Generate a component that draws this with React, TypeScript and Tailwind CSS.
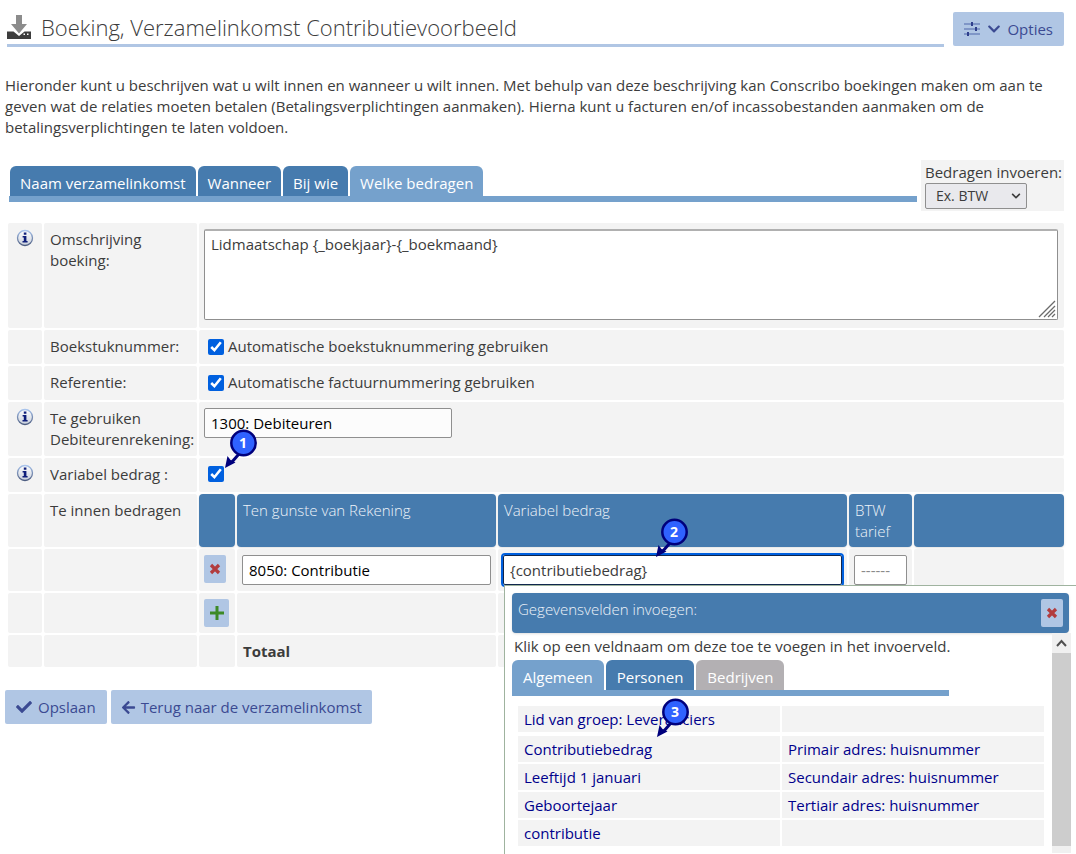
import type { ReactNode } from 'react';
import clsx from 'clsx';
import { FaArrowLeft, FaCheck, FaChevronDown } from 'react-icons/fa';

const CELL = 'bg-[#f3f3f3] rounded-xs align-top p-0';
const HEAD = 'bg-[#467bae] rounded-sm align-top text-left font-light text-[#eef3f9] px-1.5 pt-1.5 pb-1 shadow-sm';
const FIELD = 'h-[30px] border border-[#8f8f8f] rounded-xs px-1.5 text-black';
const SOFT_BUTTON = 'bg-[#b0c6e4] text-[#3b4a92] rounded-xs flex items-center';

const steps = ['Naam verzamelinkomst', 'Wanneer', 'Bij wie', 'Welke bedragen'];

const groupFields = [['Lid van groep: Leveranciers', '']];

const relationFields = [
  ['Contributiebedrag', 'Primair adres: huisnummer'],
  ['Leeftijd 1 januari', 'Secundair adres: huisnummer'],
  ['Geboortejaar', 'Tertiair adres: huisnummer'],
  ['contributie', ''],
];

function DownloadIcon() {
  return (
    <svg width="24" height="26" viewBox="0 0 24 26" aria-hidden="true">
      <path d="M0 17.500h6.500L12 22l5.500-4.500H24V25H0z" fill="#3d3d3d" />
      <path d="M9 1h6v9h5l-8 9.500L4 10h5z" fill="#8c8c8c" />
      <path d="M16.500 19.500H18V21h-1.500zM20 19.500h1.500V21H20z" fill="#fff" />
    </svg>
  );
}

function SlidersIcon() {
  return (
    <svg width="17" height="16" viewBox="0 0 17 16" fill="none" aria-hidden="true">
      <path d="M0 3h16M0 8h16M0 13h16" stroke="#6f86bd" strokeWidth="1.500" />
      <path d="M8 1v4M12 6v4M4 11v4" stroke="#2f3f8c" strokeWidth="2" />
    </svg>
  );
}

function CrossIcon() {
  return (
    <svg width="12" height="12" viewBox="0 0 12 12" aria-hidden="true">
      <path d="M2 2l8 8M10 2l-8 8" stroke="#b23c3e" strokeWidth="3.200" />
    </svg>
  );
}

function PlusIcon() {
  return (
    <svg width="14" height="14" viewBox="0 0 14 14" aria-hidden="true">
      <path d="M7 0v14M0 7h14" stroke="#3d8a26" strokeWidth="3" />
    </svg>
  );
}

function InfoIcon() {
  return (
    <svg width="18" height="18" viewBox="0 0 18 18" aria-label="Info" role="img" className="mx-auto mt-1.5">
      <defs>
        <linearGradient id="info-fill" x1="0" y1="0" x2="0" y2="1">
          <stop offset="0" stopColor="#ffffff" />
          <stop offset="1" stopColor="#c9d0dc" />
        </linearGradient>
        <linearGradient id="info-ring" x1="0" y1="0" x2="0" y2="1">
          <stop offset="0" stopColor="#a9c4ec" />
          <stop offset="1" stopColor="#4c5c80" />
        </linearGradient>
      </defs>
      <circle cx="9" cy="9" r="7.500" fill="url(#info-fill)" stroke="url(#info-ring)" strokeWidth="1.300" />
      <path d="M7.800 3.600h2.600v2.200H7.800zM6.600 7h3.800v5h1.200v1.400H6.500V12h1.300V8.400H6.600z" fill="#0f1f7a" />
    </svg>
  );
}

function Callout({ n, className }: { n: number; className: string }) {
  return (
    <span className={clsx('absolute z-20 w-[34px] h-10 pointer-events-none', className)}>
      <svg width="34" height="40" viewBox="0 0 34 40" className="absolute inset-0" aria-hidden="true">
        <path d="M15 25L7 34" stroke="#00007c" strokeWidth="3" />
        <path d="M1 39l2.500-12 3 4 5 2.500z" fill="#00007c" />
        <circle cx="19.500" cy="14" r="12.200" fill="#2f62ff" stroke="#00007c" strokeWidth="2.500" />
      </svg>
      <span className="absolute left-[6px] top-0 w-[26px] h-7 flex items-center justify-center text-sm font-bold text-white">
        {n}
      </span>
    </span>
  );
}

function Row({ h, info, label, htmlFor, children }: {
  h: string;
  info?: boolean;
  label?: string;
  htmlFor?: string;
  children: ReactNode;
}) {
  return (
    <tr className={h}>
      <td className={CELL}>{info && <InfoIcon />}</td>
      <td className={clsx(CELL, 'px-1.5 pt-1.5')}>
        {label && <label htmlFor={htmlFor}>{label}</label>}
      </td>
      {children}
    </tr>
  );
}

function FieldTable({ rows, marked }: { rows: string[][]; marked?: string }) {
  return (
    <table className="table-fixed w-[530px] ml-1 border-separate border-spacing-0.5">
      <tbody>
        {rows.map(([left, right]) => (
          <tr key={left} className="h-[26px] text-[#00008b]">
            <td className="relative bg-[#f3f3f3] p-0 pl-1.5">
              <a href="#">{left}</a>
              {left === marked && <Callout n={3} className="left-[138px] -top-[38px]" />}
            </td>
            <td className="bg-[#f3f3f3] p-0 pl-1.5">{right && <a href="#">{right}</a>}</td>
          </tr>
        ))}
      </tbody>
    </table>
  );
}

function FieldPicker() {
  return (
    <div className="absolute z-10 left-1.5 top-9 w-[580px] h-[290px] bg-white border border-[#9fb39f] pl-[7px] pt-[7px]">
      <div className="w-[557px] h-10 bg-[#467bae] rounded-sm px-1.5 flex justify-between shadow-sm">
        <h2 className="pt-1.5 font-light text-[#eef3f9]">Gegevensvelden invoegen:</h2>
        <button type="button" aria-label="Sluiten" className={clsx(SOFT_BUTTON, 'w-[22px] h-7 mt-1.5 justify-center')}>
          <CrossIcon />
        </button>
      </div>
      <div className="flex w-[559px] justify-between">
        <div className="w-[532px]">
          <p className="pt-[3px] pl-0.5">Klik op een veldnaam om deze toe te voegen in het invoerveld.</p>
          <div role="tablist" className="flex gap-0.5 mt-[3px] mb-2 w-[437px] border-b-6 border-[#75a1cc]">
            <button type="button" role="tab" className="h-[30px] px-[11px] pt-1 rounded-t-md text-white bg-[#75a1cc]">Algemeen</button>
            <button type="button" role="tab" className="h-[30px] px-[11px] pt-1 rounded-t-md text-white bg-[#467bae]">Personen</button>
            <button type="button" role="tab" className="h-[30px] px-[11px] pt-1 rounded-t-md text-white bg-[#b3b0b3]">Bedrijven</button>
          </div>
          <FieldTable rows={groupFields} />
          <FieldTable rows={relationFields} marked="Contributiebedrag" />
        </div>
        <div className="w-[19px] h-[220px] bg-[#f0f0f0]" aria-hidden="true">
          <svg width="19" height="20" viewBox="0 0 19 20" fill="none">
            <path d="M5 13l4.500-5 4.500 5" stroke="#505050" strokeWidth="2" />
          </svg>
          <div className="h-[193px] bg-[#cdcdcd]" />
        </div>
      </div>
    </div>
  );
}

export default function App() {
  return (
    <div className="min-h-screen overflow-hidden bg-white text-[#3c3c3c] text-[15px] leading-[21px] font-['Open_Sans',sans-serif] pl-[5px] pr-3 pt-3">
      <header className="flex items-start justify-between gap-[9px] pl-0.5">
        <div className="flex-1 flex items-center gap-2.5 pb-0.5 border-b-3 border-[#b0c6e4]">
          <DownloadIcon />
          <h1 className="text-[22px] leading-[30px] font-light">Boeking, Verzamelinkomst Contributievoorbeeld</h1>
        </div>
        <button type="button" className={clsx(SOFT_BUTTON, 'h-[34px] px-[11px] gap-1.5')}>
          <SlidersIcon />
          <FaChevronDown size={14} />
          Opties
        </button>
      </header>

      <p className="mt-7">
        Hieronder kunt u beschrijven wat u wilt innen en wanneer u wilt innen. Met behulp van deze beschrijving kan Conscribo boekingen maken om aan te geven wat de relaties moeten betalen (Betalingsverplichtingen aanmaken). Hierna kunt u facturen en/of incassobestanden aanmaken om de betalingsverplichtingen te laten voldoen.
      </p>

      <div className="flex gap-1 mt-[22px] pl-1">
        <div role="tablist" className="flex-1 flex items-end gap-0.5 pl-px border-b-6 border-[#75a1cc] mb-[9px]">
          {steps.map((step, i) => (
            <button
              key={step}
              type="button"
              role="tab"
              aria-selected={i === 3}
              className={clsx('h-[30px] px-2.5 pt-1 rounded-t-md text-white', i === 3 ? 'bg-[#75a1cc]' : 'bg-[#467bae]')}
            >
              {step}
            </button>
          ))}
        </div>
        <div className="w-[143px] h-[51px] bg-[#f3f3f3] pl-1 pt-0.5">
          <label htmlFor="btw" className="block whitespace-nowrap">Bedragen invoeren:</label>
          <div className="relative w-[102px]">
            <select id="btw" className="appearance-none block w-full h-[26px] bg-[#e9e9ed] border border-[#8f8f8f] rounded-xs pl-2.5 text-sm">
              <option>Ex. BTW</option>
            </select>
            <FaChevronDown size={10} className="absolute right-1.5 top-2 pointer-events-none" />
          </div>
        </div>
      </div>

      <form className="mt-2.5">
        <div className="pl-px -mr-0.5">
          <table className="table-fixed w-full border-separate border-spacing-0.5">
            <colgroup>
              <col className="w-[34px]" />
              <col className="w-[153px]" />
              <col className="w-9" />
              <col className="w-[259px]" />
              <col className="w-[349px]" />
              <col className="w-[63px]" />
              <col />
            </colgroup>
            <tbody>
              <Row h="h-[105px]" info label="Omschrijving boeking:" htmlFor="omschrijving">
                <td colSpan={5} className={clsx(CELL, 'py-1.5 pl-[5px] pr-1.5')}>
                  <div className="relative">
                    <textarea
                      id="omschrijving"
                      defaultValue="Lidmaatschap {_boekjaar}-{_boekmaand}"
                      className="block w-full h-[91px] resize-none bg-white border border-[#8f8f8f] border-t-2 border-t-[#b0b0b0] rounded-xs px-1.5 py-[3px]"
                    />
                    <svg width="18" height="18" viewBox="0 0 18 18" className="absolute right-0.5 bottom-0.5" aria-hidden="true">
                      <path d="M1 17L17 1M6 17L17 6M10 17l7-7M14 17l3-3" stroke="#6b6b6b" strokeWidth="1.300" />
                    </svg>
                  </div>
                </td>
              </Row>
              <Row h="h-[34px]" label="Boekstuknummer:">
                <td colSpan={5} className={CELL}>
                  <label className="flex items-center gap-1 pl-[9px] pt-1.5">
                    <input type="checkbox" defaultChecked className="size-4 accent-[#0060df]" />
                    Automatische boekstuknummering gebruiken
                  </label>
                </td>
              </Row>
              <Row h="h-[34px]" label="Referentie:">
                <td colSpan={5} className={CELL}>
                  <label className="flex items-center gap-1 pl-[9px] pt-1.5">
                    <input type="checkbox" defaultChecked className="size-4 accent-[#0060df]" />
                    Automatische factuurnummering gebruiken
                  </label>
                </td>
              </Row>
              <Row h="h-[54px]" info label="Te gebruiken Debiteurenrekening:" htmlFor="debiteuren">
                <td colSpan={5} className={clsx(CELL, 'py-1.5 pl-[5px]')}>
                  <input id="debiteuren" defaultValue="1300: Debiteuren" className={clsx(FIELD, 'block w-[248px] bg-[#fcfcfc]')} />
                </td>
              </Row>
              <Row h="h-[34px]" info label="Variabel bedrag :" htmlFor="variabel">
                <td colSpan={5} className={clsx(CELL, 'relative')}>
                  <input id="variabel" type="checkbox" defaultChecked className="block size-4 ml-[9px] mt-2 accent-[#0060df]" />
                  <Callout n={1} className="left-[25px] -top-[29px]" />
                </td>
              </Row>
              <Row h="h-[53px]" label="Te innen bedragen">
                <th className={HEAD} />
                <th className={HEAD}>Ten gunste van Rekening</th>
                <th className={HEAD}>Variabel bedrag</th>
                <th className={HEAD}>BTW tarief</th>
                <th className={HEAD} />
              </Row>
              <Row h="h-[41px]">
                <td className={clsx(CELL, 'pl-[5px] pt-1.5')}>
                  <button type="button" aria-label="Verwijderen" className={clsx(SOFT_BUTTON, 'w-[22px] h-7 justify-center')}>
                    <CrossIcon />
                  </button>
                </td>
                <td className={clsx(CELL, 'py-1.5 px-[5px]')}>
                  <input aria-label="Rekening" defaultValue="8050: Contributie" className={clsx(FIELD, 'block w-full bg-white')} />
                </td>
                <td className={clsx(CELL, 'py-1.5 px-[5px] relative')}>
                  <input
                    aria-label="Variabel bedrag"
                    defaultValue="{contributiebedrag}"
                    className="block w-full h-[30px] bg-white border border-[#10264d] rounded-xs px-1.5 outline-2 outline-[#0060df]"
                  />
                  <Callout n={2} className="left-[157px] -top-[31px]" />
                  <FieldPicker />
                </td>
                <td className={clsx(CELL, 'py-1.5 px-[5px]')}>
                  <input aria-label="BTW tarief" placeholder="------" className={clsx(FIELD, 'block w-full bg-white placeholder:text-[#8a8a8a]')} />
                </td>
                <td className={CELL} />
              </Row>
              <Row h="h-10">
                <td className={clsx(CELL, 'pl-[5px] pt-1.5')}>
                  <button type="button" aria-label="Toevoegen" className={clsx(SOFT_BUTTON, 'w-[25px] h-7 justify-center')}>
                    <PlusIcon />
                  </button>
                </td>
                <td className={CELL} />
                <td className={CELL} />
                <td className={CELL} />
                <td className={CELL} />
              </Row>
              <Row h="h-8">
                <td className={CELL} />
                <td className={clsx(CELL, 'px-1.5 pt-1.5 font-bold')}>Totaal</td>
                <td className={CELL} />
                <td className={CELL} />
                <td className={CELL} />
              </Row>
            </tbody>
          </table>
        </div>

        <div className="flex gap-1 mt-[21px]">
          <button type="button" className={clsx(SOFT_BUTTON, 'h-[34px] px-[11px] gap-1.5')}>
            <FaCheck size={16} />
            Opslaan
          </button>
          <button type="button" className={clsx(SOFT_BUTTON, 'h-[34px] px-2.5 gap-[5px]')}>
            <FaArrowLeft size={15} />
            Terug naar de verzamelinkomst
          </button>
        </div>
      </form>
    </div>
  );
}
